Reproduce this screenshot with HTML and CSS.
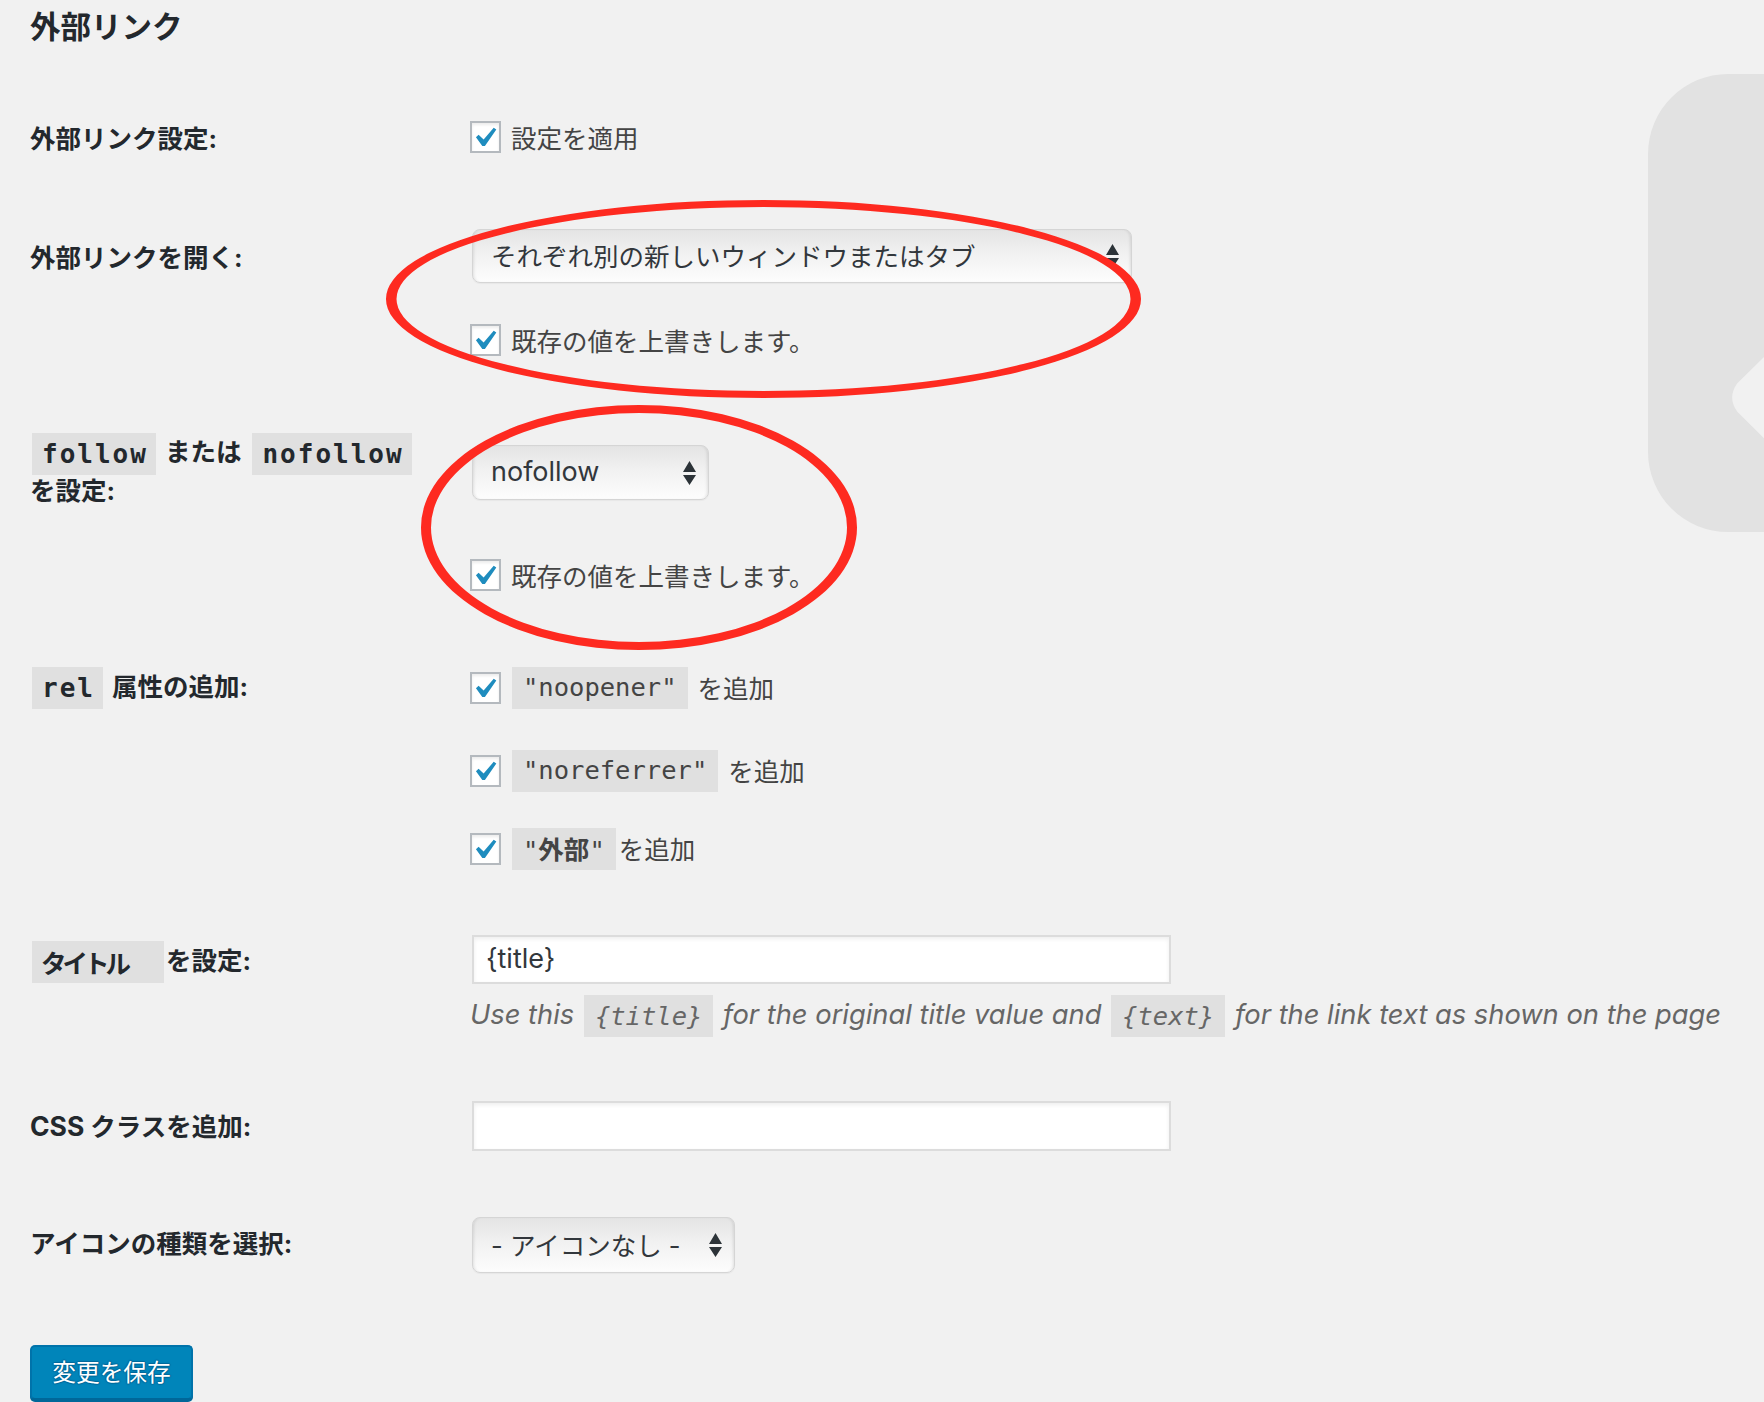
FILE: index.html
```html
<!DOCTYPE html>
<html lang="ja">
<head>
<meta charset="utf-8">
<title>外部リンク</title>
<link rel="stylesheet" href="styles.css">
</head>
<body>
<div class="page">
  <svg class="side-shape" width="116" height="458" viewBox="0 0 116 458" aria-hidden="true">
    <path d="M80 0 H116 V283 L89.3 309.3 Q79 323.5 89.3 337.7 L116 364.3 V458 H80 A80 80 0 0 1 0 378 V80 A80 80 0 0 1 80 0 Z" fill="#e2e2e2"/>
  </svg>

  <h2 class="title">外部リンク</h2>

  <div class="form">
    <div class="row row-1">
      <div class="th">外部リンク設定:</div>
      <div class="td">
        <label class="cb-line"><span class="cb"><svg viewBox="5.4 4.5 11 10.2" width="22" height="20"><path d="M14.83 4.89l1.34.94-5.81 8.38H9.02L5.78 9.67l1.34-1.25 2.57 2.4z" fill="#1e8cbe"/></svg></span><span class="txt">設定を適用</span></label>
      </div>
    </div>

    <div class="row row-2">
      <div class="th">外部リンクを開く:</div>
      <div class="td">
        <div class="select select-wide"><span class="txt">それぞれ別の新しいウィンドウまたはタブ</span><svg class="arrows" width="13" height="24" viewBox="0 0 13 24"><path d="M0 11 L6.5 0 L13 11 Z M0 14 H13 L6.5 24 Z" fill="#2c3338"/></svg></div>
        <label class="cb-line cb-after-select"><span class="cb"><svg viewBox="5.4 4.5 11 10.2" width="22" height="20"><path d="M14.83 4.89l1.34.94-5.81 8.38H9.02L5.78 9.67l1.34-1.25 2.57 2.4z" fill="#1e8cbe"/></svg></span><span class="txt">既存の値を上書きします。</span></label>
      </div>
    </div>

    <div class="row row-3">
      <div class="th">
        <div class="th-line th-line-39"><code class="lbl-code">follow</code><span class="txt">または</span><code class="lbl-code">nofollow</code></div>
        <div class="th-line th-line-39"><span class="txt">を設定:</span></div>
      </div>
      <div class="td td-pad-11">
        <div class="select select-small"><span class="latin">nofollow</span><svg class="arrows" width="13" height="24" viewBox="0 0 13 24"><path d="M0 11 L6.5 0 L13 11 Z M0 14 H13 L6.5 24 Z" fill="#2c3338"/></svg></div>
        <label class="cb-line cb-after-select-2"><span class="cb"><svg viewBox="5.4 4.5 11 10.2" width="22" height="20"><path d="M14.83 4.89l1.34.94-5.81 8.38H9.02L5.78 9.67l1.34-1.25 2.57 2.4z" fill="#1e8cbe"/></svg></span><span class="txt">既存の値を上書きします。</span></label>
      </div>
    </div>

    <div class="row row-4">
      <div class="th">
        <div class="th-line th-line-42"><code class="lbl-code">rel</code><span class="txt">属性の追加:</span></div>
      </div>
      <div class="td">
        <label class="field-line"><span class="cb"><svg viewBox="5.4 4.5 11 10.2" width="22" height="20"><path d="M14.83 4.89l1.34.94-5.81 8.38H9.02L5.78 9.67l1.34-1.25 2.57 2.4z" fill="#1e8cbe"/></svg></span><code class="fld-code">"noopener"</code><span class="txt after-code">を追加</span></label>
        <label class="field-line fl-2"><span class="cb"><svg viewBox="5.4 4.5 11 10.2" width="22" height="20"><path d="M14.83 4.89l1.34.94-5.81 8.38H9.02L5.78 9.67l1.34-1.25 2.57 2.4z" fill="#1e8cbe"/></svg></span><code class="fld-code">"noreferrer"</code><span class="txt after-code">を追加</span></label>
        <label class="field-line fl-3"><span class="cb"><svg viewBox="5.4 4.5 11 10.2" width="22" height="20"><path d="M14.83 4.89l1.34.94-5.81 8.38H9.02L5.78 9.67l1.34-1.25 2.57 2.4z" fill="#1e8cbe"/></svg></span><code class="fld-code">"<b class="cjk-b">外部</b>"</code><span class="txt after-code tight">を追加</span></label>
      </div>
    </div>

    <div class="row row-5">
      <div class="th th-pad-6">
        <div class="th-line th-line-42"><code class="lbl-code lbl-jp">タイトル</code><span class="txt tight-left">を設定:</span></div>
      </div>
      <div class="td">
        <div class="input"><span class="latin">{title}</span></div>
        <p class="desc">Use this <code class="desc-code">{title}</code> for the original title value and <code class="desc-code">{text}</code> for the link text as shown on the page</p>
      </div>
    </div>

    <div class="row row-6">
      <div class="th th-pad-7"><span class="latin-b">CSS</span> クラスを追加:</div>
      <div class="td">
        <div class="input input-empty"></div>
      </div>
    </div>

    <div class="row row-7">
      <div class="th th-pad-9">アイコンの種類を選択:</div>
      <div class="td">
        <div class="select select-icon"><span class="txt">- アイコンなし -</span><svg class="arrows" width="13" height="24" viewBox="0 0 13 24"><path d="M0 11 L6.5 0 L13 11 Z M0 14 H13 L6.5 24 Z" fill="#2c3338"/></svg></div>
      </div>
    </div>
  </div>

  <button class="btn" type="button">変更を保存</button>

  <svg class="marks" width="1764" height="1402" viewBox="0 0 1764 1402" aria-hidden="true">
    <path fill="#fe2a20" fill-rule="evenodd" d="M386 299 a377.5 99 0 1 0 755 0 a377.5 99 0 1 0 -755 0 Z M396.5 299 a367 92 0 1 0 734 0 a367 92 0 1 0 -734 0 Z"/>
    <path fill="#fe2a20" fill-rule="evenodd" d="M421 527.5 a218 122.5 0 1 0 436 0 a218 122.5 0 1 0 -436 0 Z M431 527.5 a208 114.5 0 1 0 416 0 a208 114.5 0 1 0 -416 0 Z"/>
  </svg>
</div>
</body>
</html>
```

FILE: styles.css
```css
html, body {
  margin: 0;
  padding: 0;
  background: #f1f1f1;
}

body {
  font-family: Inter, "Noto Sans CJK JP", sans-serif;
  font-size: 25.5px;
  color: #444;
  overflow: hidden;
}

.page {
  position: relative;
  width: 1764px;
  height: 1402px;
  box-sizing: border-box;
  padding-left: 30px;
}

.side-shape {
  position: absolute;
  left: 1648px;
  top: 74px;
}

.marks {
  position: absolute;
  left: 0;
  top: 0;
  pointer-events: none;
}

.title {
  margin: 0;
  padding-top: 7px;
  font-size: 30.5px;
  line-height: 40px;
  font-weight: 700;
  color: #23282d;
}

.form {
  margin-top: 71px;
}

.row {
  display: grid;
  grid-template-columns: 440px 700px;
  align-items: start;
}

.row-2 { margin-top: 71px; }
.row-3 { margin-top: 75px; }
.row-4 { margin-top: 73px; }
.row-5 { margin-top: 65px; }
.row-6 { margin-top: 64px; }
.row-7 { margin-top: 66px; }

.th {
  font-weight: 700;
  color: #23282d;
  line-height: 38px;
}

.row-1 .th { padding-top: 2px; }
.row-2 .th { padding-top: 10px; }
.th-pad-6 { padding-top: 6px; }
.th-pad-7 { padding-top: 6px; }
.th-pad-9 { padding-top: 8px; }

.th-line {
  display: flex;
  align-items: center;
  gap: 9px;
}

.th-line-39 { height: 39px; }
.th-line-42 { height: 42px; }

/* lift CJK glyphs slightly: Noto's em box sits below the content-area centre */
.txt { padding-bottom: 3px; }
.cb-line .txt { padding-bottom: 1px; }

.lbl-code {
  display: inline-block;
  height: 42px;
  line-height: 42px;
  padding: 0 8px 0 10px;
  margin-left: 2px;
  font-family: "DejaVu Sans Mono", monospace;
  font-weight: 700;
  font-size: 26px;
  letter-spacing: 2px;
  background: rgba(0, 0, 0, 0.07);
  color: #23282d;
}

.lbl-code.lbl-jp {
  font-family: "Noto Sans CJK JP", sans-serif;
  font-size: 25.5px;
  letter-spacing: -4px;
  padding: 0 37px 0 9px;
}

.tight-left { margin-left: -7px; }

.td-pad-11 { padding-top: 11px; }

.cb-line {
  display: flex;
  align-items: center;
  gap: 10px;
  height: 38px;
}

.cb-after-select { margin-top: 38px; }
.cb-after-select-2 { margin-top: 56px; }

.cb {
  position: relative;
  flex: none;
  width: 31px;
  height: 32px;
  box-sizing: border-box;
  border: 2px solid #b4b9be;
  background: #fff;
  box-shadow: inset 0 2px 3px rgba(0, 0, 0, 0.08);
}

.cb svg {
  position: absolute;
  left: 3px;
  top: 4px;
}

.select {
  position: relative;
  display: flex;
  align-items: center;
  justify-content: space-between;
  margin-left: 2px;
  box-sizing: border-box;
  padding: 0 12px 0 18px;
  border: 1px solid #d5d5d5;
  border-radius: 8px;
  background: linear-gradient(#e4e4e4 0%, #f1f1f1 45%, #fdfdfd 100%);
  box-shadow: inset 3px 0 3px -2px rgba(0, 0, 0, 0.1), inset -3px 0 3px -2px rgba(0, 0, 0, 0.1), 0 1px 1px rgba(0, 0, 0, 0.04);
  color: #32373c;
  white-space: nowrap;
}

.select-wide { width: 660px; height: 54px; }
.select-small { width: 237px; height: 55px; }
.select-icon { width: 263px; height: 56px; }

.arrows { flex: none; }

.latin {
  font-family: Inter, "Noto Sans CJK JP", sans-serif;
  font-size: 27px;
  padding-bottom: 2px;
}

.latin-b {
  font-family: Inter, sans-serif;
  font-size: 26.5px;
}

.field-line {
  display: flex;
  align-items: center;
  height: 42px;
}

.fl-2 { margin-top: 41px; }
.fl-3 { margin-top: 36px; }

.field-line .cb { margin-right: 11px; }

.fld-code {
  display: inline-block;
  height: 42px;
  line-height: 40px;
  padding: 0 11px 2px;
  box-sizing: border-box;
  font-family: "DejaVu Sans Mono", "Noto Sans CJK JP", monospace;
  font-size: 25.5px;
  background: rgba(0, 0, 0, 0.07);
  color: #444;
}

.cjk-b {
  font-family: "Noto Sans CJK JP", sans-serif;
  font-weight: 700;
}

.after-code { margin-left: 10px; }
.after-code.tight { margin-left: 3px; }

.input {
  display: flex;
  align-items: center;
  margin-left: 2px;
  width: 699px;
  height: 49px;
  box-sizing: border-box;
  padding-left: 12px;
  border: 2px solid #dcdcdc;
  background: #fff;
  box-shadow: inset 0 2px 4px rgba(0, 0, 0, 0.07);
  color: #32373c;
}

.input-empty { height: 50px; }

.desc {
  margin: 11px 0 0 0;
  width: 1300px;
  height: 42px;
  line-height: 40px;
  font-size: 27.3px;
  font-style: italic;
  color: #666;
  white-space: nowrap;
}

.desc-code {
  display: inline-block;
  height: 42px;
  line-height: 42px;
  margin: 0 2px;
  padding: 0 11px;
  vertical-align: top;
  font-family: "DejaVu Sans Mono", monospace;
  font-size: 25.5px;
  font-style: italic;
  background: rgba(0, 0, 0, 0.07);
  color: #666;
}

.btn {
  display: block;
  margin-top: 72px;
  width: 163px;
  height: 55px;
  padding: 0 0 3px;
  box-sizing: border-box;
  border: 2px solid #0073aa;
  border-bottom-color: #006799;
  border-radius: 5px;
  background: #0085ba;
  box-shadow: 0 2px 0 #006799;
  color: #fff;
  font-family: "Noto Sans CJK JP", sans-serif;
  font-size: 23.7px;
  text-shadow: 0 -1px 1px #006799, 1px 0 1px #006799, 0 1px 1px #006799, -1px 0 1px #006799;
}
```
